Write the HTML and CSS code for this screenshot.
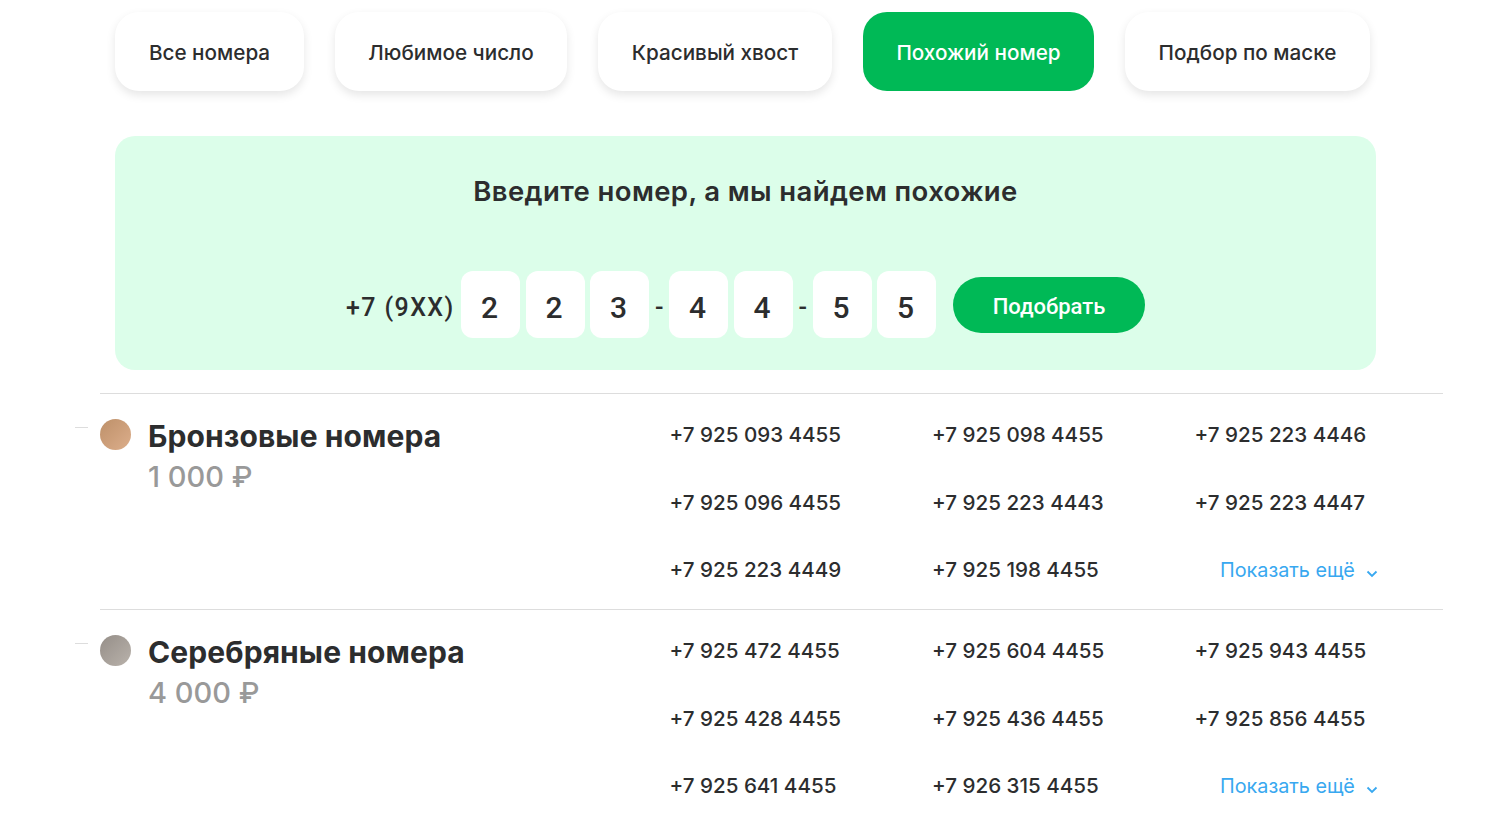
FILE: index.html
```html
<!DOCTYPE html>
<html lang="en">
<head>
    <meta charset="UTF-8">
    <title>Номера</title>
    <link rel="stylesheet" href="styles.css">
</head>
<body>

<div class="tabs">
    <a class="tab tab-all" href="#">Все номера</a>
    <a class="tab tab-fav" href="#">Любимое число</a>
    <a class="tab tab-tail" href="#">Красивый хвост</a>
    <a class="tab tab-like active" href="#">Похожий номер</a>
    <a class="tab tab-mask" href="#">Подбор по маске</a>
</div>

<div class="panel">
    <h2 class="panel-title">Введите номер, а мы найдем похожие</h2>
    <div class="number-form">
        <span class="prefix">+7 (9XX)</span>
        <span class="digit">2</span>
        <span class="digit">2</span>
        <span class="digit">3</span>
        <span class="dash">-</span>
        <span class="digit">4</span>
        <span class="digit">4</span>
        <span class="dash">-</span>
        <span class="digit">5</span>
        <span class="digit">5</span>
        <button class="pick-btn">Подобрать</button>
    </div>
</div>

<div class="section">
    <span class="side-mark"></span>
    <div class="section-head">
        <span class="medal bronze"></span>
        <div>
            <div class="section-name">Бронзовые номера</div>
            <div class="section-price">1 000 ₽</div>
        </div>
    </div>
    <div class="numbers">
        <a href="#">+7 925 093 4455</a>
        <a href="#">+7 925 098 4455</a>
        <a href="#">+7 925 223 4446</a>
        <a href="#">+7 925 096 4455</a>
        <a href="#">+7 925 223 4443</a>
        <a href="#">+7 925 223 4447</a>
        <a href="#">+7 925 223 4449</a>
        <a href="#">+7 925 198 4455</a>
        <a href="#" class="more">Показать ещё
            <svg width="12" height="8" viewBox="0 0 12 8"><path d="M1.5 1.5 6 6l4.500-4.500" fill="none" stroke="#38a8f0" stroke-width="1.800"/></svg>
        </a>
    </div>
</div>

<div class="section">
    <span class="side-mark"></span>
    <div class="section-head">
        <span class="medal silver"></span>
        <div>
            <div class="section-name">Серебряные номера</div>
            <div class="section-price">4 000 ₽</div>
        </div>
    </div>
    <div class="numbers">
        <a href="#">+7 925 472 4455</a>
        <a href="#">+7 925 604 4455</a>
        <a href="#">+7 925 943 4455</a>
        <a href="#">+7 925 428 4455</a>
        <a href="#">+7 925 436 4455</a>
        <a href="#">+7 925 856 4455</a>
        <a href="#">+7 925 641 4455</a>
        <a href="#">+7 926 315 4455</a>
        <a href="#" class="more">Показать ещё
            <svg width="12" height="8" viewBox="0 0 12 8"><path d="M1.5 1.5 6 6l4.500-4.500" fill="none" stroke="#38a8f0" stroke-width="1.800"/></svg>
        </a>
    </div>
</div>

</body>
</html>
```

FILE: styles.css
```css
html, body {
    height: 823px;
    overflow: hidden;
}
body {
    font-family: Inter, "Liberation Sans", sans-serif;
    margin: 0;
    padding: 12px 57px 0 100px;
    background-color: #ffffff;
    color: #2c2d2e;
}
a {
    color: inherit;
    text-decoration: none;
}
/* Tabs */
.tabs {
    display: flex;
    gap: 31px;
    margin-left: 15px;
}
.tab {
    height: 79px;
    padding-top: 2px;
    display: flex;
    align-items: center;
    justify-content: center;
    box-sizing: border-box;
    border-radius: 24px;
    background-color: #ffffff;
    box-shadow: 0 4px 10px rgba(0, 0, 0, 0.1);
    font-size: 20.700px;
    font-weight: 500;
}
.tab-all { width: 189px; }
.tab-fav { width: 232px; }
.tab-tail { width: 234px; }
.tab-like { width: 231px; }
.tab-mask { width: 245px; }
.tab.active {
    background-color: #00b956;
    color: white;
    box-shadow: none;
}
/* Search panel */
.panel {
    width: 1261px;
    height: 234px;
    margin: 45px 0 23px 15px;
    padding-top: 36px;
    box-sizing: border-box;
    background-color: #dcfeea;
    border-radius: 20px;
}
.panel-title {
    margin: 0;
    text-align: center;
    font-size: 27.500px;
    letter-spacing: 0.380px;
    line-height: 38px;
    font-weight: 600;
}
.number-form {
    display: flex;
    align-items: center;
    margin: 61px 0 0 231px;
    font-family: Roboto, "Liberation Sans", sans-serif;
}
.prefix {
    font-size: 25px;
    font-weight: 500;
    width: 115px;
    padding-top: 6px;
    letter-spacing: 1.400px;
    white-space: nowrap;
}
.digit {
    width: 59px;
    height: 67px;
    margin-right: 5.500px;
    padding: 5px 2px 0 0;
    box-sizing: border-box;
    display: flex;
    align-items: center;
    justify-content: center;
    background-color: white;
    border-radius: 12px;
    font-size: 30px;
    font-weight: 500;
}
.dash {
    width: 14.500px;
    padding: 6px 5px 0 0;
    box-sizing: border-box;
    font-size: 25px;
    font-weight: 500;
    text-align: center;
}
.pick-btn {
    width: 192px;
    height: 56px;
    margin-left: 11.500px;
    padding-top: 4px;
    border: none;
    border-radius: 28px;
    background-color: #00b956;
    color: white;
    font-family: inherit;
    font-size: 22px;
    font-weight: 500;
}
/* Number sections */
.section {
    position: relative;
    height: 215px;
    border-top: 1px solid #dddddd;
    display: flex;
}
.side-mark {
    position: absolute;
    left: -25px;
    top: 33px;
    width: 13px;
    height: 1px;
    background-color: #dddddd;
}
.section-head {
    width: 570px;
    display: flex;
    gap: 17px;
    padding-top: 25px;
}
.medal {
    width: 31px;
    height: 31px;
    border-radius: 50%;
    flex-shrink: 0;
}
.bronze {
    background: linear-gradient(135deg, #bd9069, #dcae8b);
}
.silver {
    background: linear-gradient(135deg, #958e88, #b9b2ab);
}
.section-name {
    font-size: 30px;
    letter-spacing: 0.100px;
    line-height: 36px;
    font-weight: 700;
    margin-top: -1.500px;
}
.section-price {
    font-size: 29px;
    line-height: 36px;
    font-weight: 500;
    color: #999999;
    margin-top: 5.500px;
}
.numbers {
    display: grid;
    grid-template-columns: 262.500px 262.500px 1fr;
    grid-auto-rows: 67.600px;
    padding-top: 25.300px;
    margin-left: -0.500px;
    font-size: 20.600px;
    line-height: 32px;
    font-weight: 500;
}
.numbers .more {
    color: #38a8f0;
    font-size: 19.800px;
    font-weight: 400;
    margin-left: 25.500px;
}
.more svg {
    margin-left: 5.500px;
    vertical-align: -1px;
}
```
